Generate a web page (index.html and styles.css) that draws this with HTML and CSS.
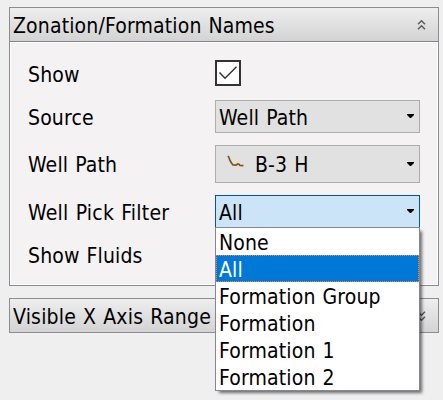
FILE: index.html
```
<!DOCTYPE html>
<html lang="en">
<head>
<meta charset="utf-8">
<title>Properties</title>
<link rel="stylesheet" href="styles.css">
</head>
<body>
<section class="group">
  <header class="head"><span class="title-a">Zonation/Formation Names</span>
    <svg class="chev" width="9" height="12" viewBox="0 0 9 12"><path d="M1 5.2 4.5 1.7 8 5.2M1 10.2 4.5 6.7 8 10.2"/></svg>
  </header>
  <div class="form">
    <div class="row show"><span class="label">Show</span>
      <span class="check"><svg width="22" height="22" viewBox="0 0 22 22"><path d="M2.5 10.5 8 16.2 19.5 4.8"/></svg></span></div>
    <div class="row source"><span class="label">Source</span>
      <div class="combo"><span class="value">Well Path</span><svg class="arrow" width="7" height="4" viewBox="0 0 7 4"><path d="M0 0H7V1L4 4H3L0 1Z"/></svg></div></div>
    <div class="row path"><span class="label">Well Path</span>
      <div class="combo"><svg class="well" width="17" height="12" viewBox="0 0 17 12"><path d="M1 1 2 2.5 2.7 5 4.5 8 6 10 9 10.2 10.5 9 12 9.3 13 10.5 16.5 10.7"/></svg><span class="value bh">B-3 H</span><svg class="arrow" width="7" height="4" viewBox="0 0 7 4"><path d="M0 0H7V1L4 4H3L0 1Z"/></svg></div></div>
    <div class="row filter"><span class="label wide">Well Pick Filter</span>
      <div class="combo open"><span class="value">All</span><svg class="arrow" width="7" height="4" viewBox="0 0 7 4"><path d="M0 0H7V1L4 4H3L0 1Z"/></svg>
        <ul class="menu"><li>None</li><li class="selected">All</li><li>Formation Group</li><li>Formation</li><li>Formation 1</li><li>Formation 2</li></ul>
      </div></div>
    <div class="row fluids"><span class="label">Show Fluids</span></div>
  </div>
</section>
<section class="group closed">
  <header class="head"><span class="title-b">Visible X Axis Range</span>
    <svg class="chev" width="9" height="12" viewBox="0 0 9 12"><path d="M1 1.8 4.5 5.3 8 1.8M1 6.8 4.5 10.3 8 6.8"/></svg>
  </header>
</section>
</body>
</html>
```
FILE: styles.css
```
* { box-sizing: border-box; }
body {
  margin: 0;
  padding: 7px 4px 0 9px;
  height: 400px;
  overflow: hidden;
  background: #efefef;
  color: #000;
  font: 21px/27px "DejaVu Sans Condensed", "DejaVu Sans", sans-serif;
  font-stretch: condensed;
  letter-spacing: 0.15px;
  word-spacing: 0.8px;
  white-space: nowrap;
}
.group { width: 430px; height: 279px; border: 1px solid #8b8b93; }
.closed { height: 35px; margin-top: 12px; }
.head {
  display: flex;
  align-items: center;
  justify-content: space-between;
  height: 34px;
  padding: 0 12px 0 3px;
  border-bottom: 1px solid #85858d;
  background: linear-gradient(#eee, #d3d3d3);
}
.head span { padding-top: 4px; }
.title-b { letter-spacing: 0.2px; }
.closed .head { height: 33px; border-bottom: 0; }
.chev { fill: none; stroke: #5c5c5c; stroke-width: 1.5; }
.form {
  height: 243px;
  padding-top: 17px;
  border: 1px solid #fff;
  background: #f4f2f3;
}
.row { display: flex; align-items: center; padding-left: 17px; }
.label { width: 187px; flex: none; padding-top: 4px; }
.path .label, .fluids .label { padding-top: 3px; }
.wide { letter-spacing: 0.25px; }
.show { height: 26px; }
.source { height: 33px; margin-top: 14px; }
.path { height: 38px; margin-top: 12px; }
.filter { height: 33px; margin-top: 12px; }
.fluids { height: 27px; margin-top: 13px; }
.check { width: 26px; height: 26px; border: 2px solid #333; background: #fff; }
.check svg { display: block; fill: none; stroke: #333; stroke-width: 1.5; }
.combo {
  position: relative;
  display: flex;
  align-items: center;
  width: 205px;
  height: 100%;
  padding: 0 5px 0 3px;
  border: 1px solid #adadad;
  background: #e1e1e1;
}
.value { padding-top: 4px; }
.path .value { padding-top: 3px; }
.arrow { margin-left: auto; margin-top: -1px; fill: #000; }
.well { margin-left: 8px; margin-top: -6px; fill: none; stroke: #80570f; stroke-width: 1.7; }
.bh { margin-left: 11px; }
.open { border-color: #0054a0; background: #cce4f7; }
.menu {
  position: absolute;
  z-index: 1;
  left: -1px;
  top: 31px;
  width: 205px;
  margin: 0;
  padding: 0;
  list-style: none;
  border: 1px solid #828790;
  background: #fff;
  box-shadow: 3px 3px 3px -1px rgba(0, 0, 0, .55);
}
.menu li { height: 27px; padding-left: 3px; line-height: 31px; }
.menu .selected { padding-left: 2px; line-height: 29px; border: 1px dotted #ff8728; background: #0078d7; color: #fff; }
```
